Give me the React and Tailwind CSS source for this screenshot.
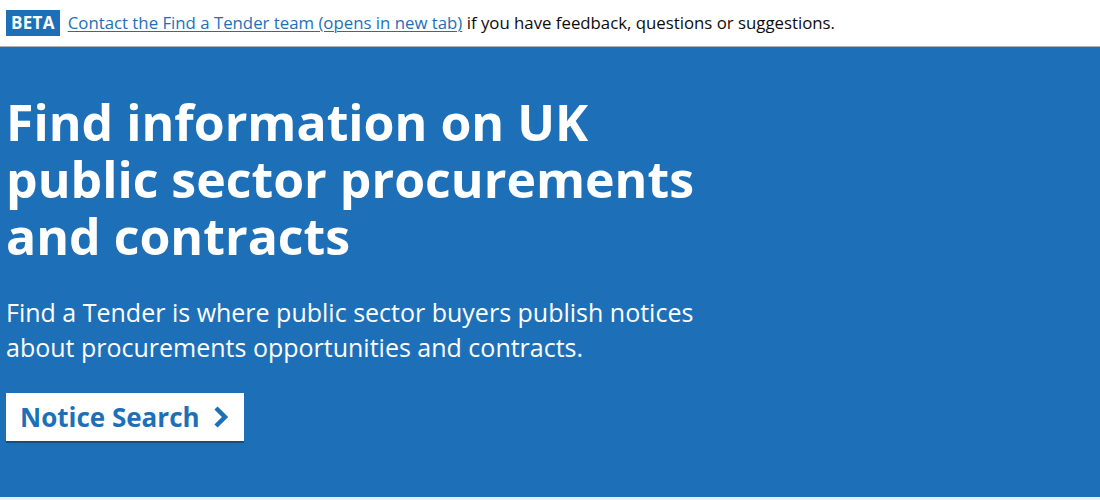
export default function App() {
  return (
    <div className="min-h-screen bg-white" style={{ fontFamily: '"Open Sans", "Liberation Sans", Arial, sans-serif' }}>
      {/* Phase banner */}
      <div className="px-[6px] h-[47px] border-b border-[#b1b4b6] flex items-center">
        <strong className="bg-[#1d70b8] text-white font-bold text-[17px] leading-none px-[5px] pt-[4px] pb-[5px] mr-[8px] tracking-[0.3px]">
          BETA
        </strong>
        <span className="text-[16.8px] leading-[26px] text-[#0b0c0c]">
          <a href="#" className="text-[#1d70b8] underline underline-offset-[2px] decoration-1">
            Contact the Find a Tender team (opens in new tab)
          </a>{' '}
          if you have feedback, questions or suggestions.
        </span>
      </div>

      {/* Hero */}
      <div className="bg-[#1d70b8] h-[453px] px-[6px] pt-[47px] border-b-[3px] border-[#e8eef5]">
        <div className="max-w-[710px]">
          <h1 className="text-white font-bold text-[50px] leading-[57px]">
            Find information on UK public sector procurements and contracts
          </h1>
          <p className="text-white text-[25px] leading-[35px] mt-[30px]">
            Find a Tender is where public sector buyers publish notices about procurements opportunities and contracts.
          </p>
          <a
            href="#"
            className="mt-[28px] inline-flex items-center gap-[13px] bg-white text-[#1d70b8] font-bold text-[26px] leading-none pl-[14px] pr-[15px] py-[11px] shadow-[0_2px_0_#144e81]"
          >
            Notice Search
            <svg width="16" height="22" viewBox="0 0 16 22" fill="none">
              <path d="M3 2l9 9-9 9" stroke="currentColor" strokeWidth="4.5" />
            </svg>
          </a>
        </div>
      </div>
    </div>
  );
}
